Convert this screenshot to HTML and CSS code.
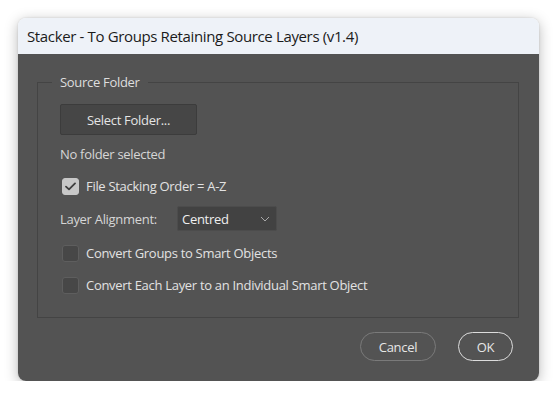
FILE: index.html
```html
<!DOCTYPE html>
<html>
<head>
<meta charset="utf-8">
<link rel="stylesheet" href="styles.css">
</head>
<body>
<div class="window">
  <div class="titlebar">Stacker - To Groups Retaining Source Layers (v1.4)</div>
  <div class="content">
    <fieldset class="group">
      <legend class="legend">Source Folder</legend>
      <button class="btn-select">Select Folder...</button>
      <div class="status">No folder selected</div>
      <label class="check-row row-stack">
        <span class="box checked">
          <svg width="11" height="9" viewBox="0 0 11 9"><path d="M1 4.6 L4 7.4 L10 1.4" fill="none" stroke="#3f3f3f" stroke-width="1.8" stroke-linecap="round" stroke-linejoin="round"/></svg>
        </span>
        <span class="check-label">File Stacking Order = A-Z</span>
      </label>
      <div class="align-row">
        <span class="align-label">Layer Alignment:</span>
        <div class="select">
          <span>Centred</span>
          <svg width="10" height="6" viewBox="0 0 10 6"><path d="M1 1 L5 5 L9 1" fill="none" stroke="#a8a8a8" stroke-width="1"/></svg>
        </div>
      </div>
      <label class="check-row row-groups">
        <span class="box"></span>
        <span class="check-label">Convert Groups to Smart Objects</span>
      </label>
      <label class="check-row row-each">
        <span class="box"></span>
        <span class="check-label">Convert Each Layer to an Individual Smart Object</span>
      </label>
    </fieldset>
    <div class="actions">
      <button class="pill cancel">Cancel</button>
      <button class="pill ok">OK</button>
    </div>
  </div>
</div>
</body>
</html>
```
FILE: styles.css
```css
html, body {
  margin: 0;
  padding: 0;
  background: #ffffff;
}
body {
  padding: 18px 0 0 18px;
  font-family: "Open Sans", "Noto Sans", sans-serif;
  letter-spacing: -0.3px;
}
.window {
  width: 521px;
  height: 363px;
  border-radius: 8px;
  overflow: hidden;
  box-shadow: 0 3px 14px rgba(0, 0, 0, 0.28), 0 0 2px rgba(0, 0, 0, 0.15);
  display: flex;
  flex-direction: column;
}
.titlebar {
  height: 36px;
  line-height: 36px;
  background: #eef2f8;
  color: #1b1b1b;
  font-size: 15px;
  padding-left: 9px;
  letter-spacing: -0.36px;
}
.content {
  flex: 1;
  background: #535353;
  padding: 28px 20px 0 19px;
  display: flex;
  flex-direction: column;
}
.group {
  border: 1px solid #444444;
  box-sizing: border-box;
  padding: 0 0 0 22px;
  display: flex;
  flex-direction: column;
  align-items: flex-start;
  margin: -9px 0 0 0;
  height: 245px;
}
.legend {
  margin-left: -8px;
  padding: 0 8px;
  color: #dedede;
  font-size: 13px;
  line-height: 18px;
}
.btn-select {
  margin-top: 13px;
  width: 137px;
  height: 31px;
  background: #464646;
  border: 1px solid #3c3c3c;
  border-radius: 2px;
  color: #e4e4e4;
  font-family: inherit;
  letter-spacing: inherit;
  font-size: 13px;
  padding: 0;
}
.status {
  margin-top: 10px;
  color: #d6d6d6;
  font-size: 13px;
  line-height: 18px;
}
.check-row {
  display: flex;
  align-items: center;
  margin-left: 2px;
}
.row-stack { margin-top: 14px; }
.row-groups { margin-top: 13px; }
.row-each { margin-top: 14px; }
.box {
  width: 17px;
  height: 17px;
  box-sizing: border-box;
  border-radius: 3px;
  background: #474747;
  border: 1px solid #5e5e5e;
  display: flex;
  align-items: center;
  justify-content: center;
}
.box.checked {
  background: #c8c8c8;
  border-color: #c8c8c8;
}
.check-label {
  margin-left: 7px;
  color: #e2e2e2;
  font-size: 13px;
  line-height: 18px;
}
.align-row {
  display: flex;
  align-items: center;
  margin-top: 11px;
}
.align-label {
  color: #d6d6d6;
  font-size: 13px;
  width: 117px;
}
.select {
  width: 100px;
  height: 25px;
  box-sizing: border-box;
  background: #424242;
  border: 1px solid #4c4c4c;
  border-radius: 2px;
  display: flex;
  align-items: center;
  justify-content: space-between;
  padding: 0 6px 0 4px;
  color: #eeeeee;
  font-size: 13px;
}
.actions {
  display: flex;
  justify-content: flex-end;
  gap: 22px;
  margin-top: 14px;
  padding-right: 6px;
}
.pill {
  height: 29px;
  border-radius: 15px;
  background: transparent;
  font-family: inherit;
  letter-spacing: inherit;
  font-size: 13px;
  color: #e6e6e6;
  padding: 0;
}
.cancel {
  width: 76px;
  border: 1px solid #7a7a7a;
}
.ok {
  width: 55px;
  border: 1.5px solid #dcdcdc;
}
```
